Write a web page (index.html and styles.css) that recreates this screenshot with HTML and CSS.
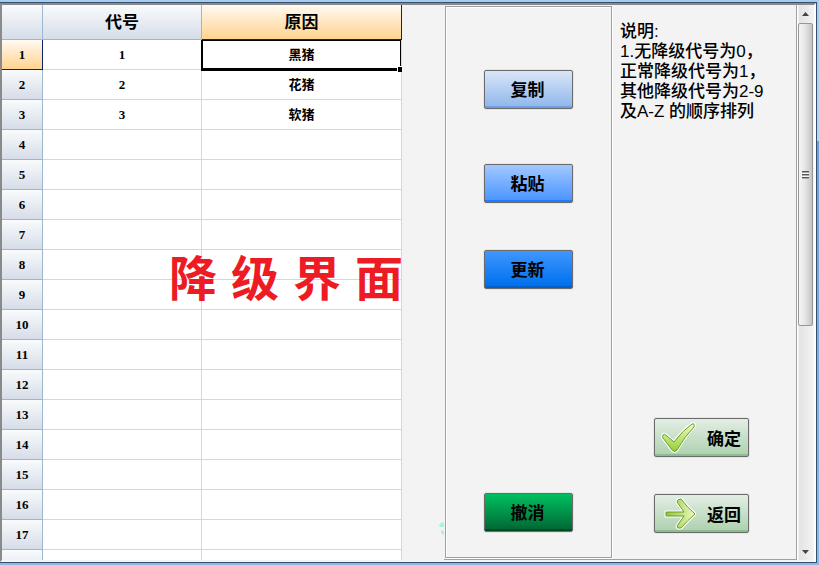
FILE: index.html
```
<!DOCTYPE html>
<html lang="zh-CN">
<head>
    <meta charset="UTF-8">
    <meta name="viewport" content="width=device-width, initial-scale=1.0">
    <title>降级界面</title>
    <link rel="stylesheet" href="styles.css">
</head>
<body>

    <div class="window">
        <main class="content">
            <section class="sheet">
                <table>
                    <colgroup>
                        <col class="col-num">
                        <col class="col-code">
                        <col class="col-reason">
                    </colgroup>
                    <thead>
                        <tr><th></th><th scope="col">代号</th><th scope="col" class="active">原因</th></tr>
                    </thead>
                    <tbody>
                        <tr><th scope="row" class="active">1</th><td>1</td><td class="selected">黑猪</td></tr>
                        <tr><th scope="row">2</th><td>2</td><td>花猪</td></tr>
                        <tr><th scope="row">3</th><td>3</td><td>软猪</td></tr>
                        <tr><th scope="row">4</th><td></td><td></td></tr>
                        <tr><th scope="row">5</th><td></td><td></td></tr>
                        <tr><th scope="row">6</th><td></td><td></td></tr>
                        <tr><th scope="row">7</th><td></td><td></td></tr>
                        <tr><th scope="row">8</th><td></td><td></td></tr>
                        <tr><th scope="row">9</th><td></td><td></td></tr>
                        <tr><th scope="row">10</th><td></td><td></td></tr>
                        <tr><th scope="row">11</th><td></td><td></td></tr>
                        <tr><th scope="row">12</th><td></td><td></td></tr>
                        <tr><th scope="row">13</th><td></td><td></td></tr>
                        <tr><th scope="row">14</th><td></td><td></td></tr>
                        <tr><th scope="row">15</th><td></td><td></td></tr>
                        <tr><th scope="row">16</th><td></td><td></td></tr>
                        <tr><th scope="row">17</th><td></td><td></td></tr>
                        <tr><th></th><td></td><td></td></tr>
                    </tbody>
                </table>
                <div class="caption"><span>降</span><span>级</span><span>界</span><span>面</span></div>
            </section>

            <section class="form">
                <svg class="speck" width="5" height="16" viewBox="0 0 5 16" aria-hidden="true">
                    <path d="M0 4L3 1L5 2V6L1 6ZM2 9L5 10V14L2 12Z" fill="#a8f3df"/>
                </svg>
                <div class="actions">
                    <button type="button" class="btn copy">复制</button>
                    <button type="button" class="btn paste">粘贴</button>
                    <button type="button" class="btn update">更新</button>
                    <button type="button" class="btn undo">撤消</button>
                </div>
                <div class="side">
                    <p class="notes">说明:<br>1.无降级代号为0，<br>正常降级代号为1，<br>其他降级代号为2-9<br>及A-Z 的顺序排列</p>
                    <div class="confirm">
                        <button type="button" class="btn green">
                            <svg width="36" height="32" viewBox="0 0 36 32" aria-hidden="true">
                                <defs>
                                    <linearGradient id="lime" x1="0" y1="0" x2="0" y2="1">
                                        <stop offset="0" stop-color="#f0fbc4"/>
                                        <stop offset="1" stop-color="#93cf36"/>
                                    </linearGradient>
                                </defs>
                                <path d="M3 13Q4 11 7 14L14 20Q22 9 32 2Q35 1 34 5Q25 14 17 28Q15 31 12 28L3 16Q2 15 3 13Z" fill="none" stroke="#fff" stroke-width="3"/>
                                <path d="M3 13Q4 11 7 14L14 20Q22 9 32 2Q35 1 34 5Q25 14 17 28Q15 31 12 28L3 16Q2 15 3 13Z" fill="url(#lime)" stroke="#6c9a22"/>
                            </svg>
                            <span>确定</span>
                        </button>
                        <button type="button" class="btn green">
                            <svg width="36" height="32" viewBox="0 0 36 32" aria-hidden="true">
                                <defs>
                                    <linearGradient id="leaf" x1="0" y1="0" x2="1" y2="0">
                                        <stop offset="0" stop-color="#8cc63a"/>
                                        <stop offset="1" stop-color="#eefac0"/>
                                    </linearGradient>
                                </defs>
                                <path d="M6 14H24L17 4Q17 1 21 1Q27 9 35 16Q27 23 21 30Q17 31 17 28L24 18H6Z" fill="none" stroke="#fff" stroke-width="3" stroke-linejoin="round"/>
                                <path d="M6 14H24L17 4Q17 1 21 1Q27 9 35 16Q27 23 21 30Q17 31 17 28L24 18H6Z" fill="url(#leaf)" stroke="#6c9a22" stroke-linejoin="round"/>
                            </svg>
                            <span>返回</span>
                        </button>
                    </div>
                </div>
            </section>

            <div class="scrollbar" aria-hidden="true">
                <svg class="arrow" width="14" height="17" viewBox="0 0 14 17"><path d="M4 11L7.500 7L11 11Z" fill="#444"/></svg>
                <div class="thumb"><span class="grip"></span></div>
                <svg class="arrow" width="14" height="17" viewBox="0 0 14 17"><path d="M4 7L7.500 11L11 7Z" fill="#444"/></svg>
            </div>
        </main>
    </div>

</body>
</html>
```
FILE: styles.css
```
* {
    box-sizing: border-box;
}
body {
    margin: 0;
    height: 100vh;
    padding: 2px 2px 2px 0;
    background: linear-gradient(#a9cbee 0, #b9d4ef 25%, #6f9fd6 25%, #8db8e6 100%);
    font-family: "Liberation Sans", "Noto Sans CJK SC", sans-serif;
    color: #000;
}
.window {
    height: 100%;
    border: 1px solid #35506f;
    border-left: 0;
}
.content {
    display: flex;
    height: 100%;
    border: 2px solid #8a8a8a;
    border-right-color: #fff;
    border-bottom-color: #f5f5f5;
    background: #f3f3f3;
}

/* spreadsheet */
.sheet {
    position: relative;
    flex: 0 0 400px;
    overflow: hidden;
    background: #fff;
}
table {
    width: 100%;
    table-layout: fixed;
    border-collapse: separate;
    border-spacing: 0;
}
.col-num {
    width: 41px;
}
.col-code {
    width: 159px;
}
th, td {
    height: 30px;
    padding: 0;
    border-right: 1px solid #d0d7e5;
    border-bottom: 1px solid #d0d7e5;
    font-family: "Liberation Serif", "Noto Sans CJK SC", serif;
    font-size: 13px;
    line-height: 20px;
    font-weight: bold;
    text-align: center;
}
th {
    border-color: #9eb6ce;
    background: linear-gradient(#f9fbfc, #d6dde8);
}
thead th {
    height: 35px;
    padding-top: 2px;
    font-size: 17px;
}
th.active {
    border-color: #0a246a;
    background: linear-gradient(#fffaf2, #ffd38f);
}
.selected {
    position: relative;
}
.selected::before {
    content: "";
    position: absolute;
    inset: 0 0 -2px -1px;
    border: 2px solid #000;
    border-width: 1px 1px 3px 2px;
}
.selected::after {
    content: "";
    position: absolute;
    right: -1px;
    bottom: -3px;
    width: 4px;
    height: 5px;
    border: 1px solid #fff;
    border-width: 1px 0 0 1px;
    background: #000;
}
.caption {
    position: absolute;
    right: -1px;
    top: 240px;
    display: flex;
    gap: 14px;
    color: #ed1c24;
    font-family: "Noto Sans CJK SC", sans-serif;
    font-size: 48px;
    line-height: 60px;
    font-weight: bold;
}

/* right side form */
.form {
    position: relative;
    display: flex;
    flex: 1;
    margin-left: 42px;
    border-right: 1px solid #a0a0a0;
    border-bottom: 1px solid #a0a0a0;
}
.speck {
    position: absolute;
    left: -5px;
    bottom: 22px;
}
.actions {
    display: flex;
    flex-direction: column;
    align-items: center;
    gap: 47px;
    width: 167px;
    margin: 1px;
    padding: 63px 0 25px;
    border: 1px solid #a0a0a0;
    box-shadow: inset 1px 1px #fff, 1px 1px #fff;
}
.btn {
    width: 89px;
    height: 39px;
    padding: 0 2px 2px 0;
    border: 1px solid #6b6b6b;
    border-radius: 2px;
    box-shadow: 0 0 0 1px #e6e6e6;
    color: #000;
    font-family: "Noto Sans CJK SC", sans-serif;
    font-size: 17px;
    line-height: 24px;
    font-weight: bold;
}
.copy {
    margin-bottom: 8px;
    background: linear-gradient(#d9e6f7, #92b9ec 94%, #6f9fe0 94%);
}
.paste {
    background: linear-gradient(#a2c8ff, #4c96ff 94%, #1f7aff 94%);
}
.update {
    background: linear-gradient(#3f97ff, #0070ec 94%, #0060d0 94%);
}
.undo {
    margin-top: auto;
    background: linear-gradient(#00c060, #006a35 94%, #004a24 94%);
}
.side {
    display: flex;
    flex: 1;
    flex-direction: column;
    justify-content: space-between;
    padding: 17px 0 26px 7px;
}
.notes {
    margin: 0;
    font-size: 17px;
    line-height: 20px;
    font-weight: 500;
}
.confirm {
    display: flex;
    flex-direction: column;
    align-items: flex-start;
    gap: 37px;
    padding-left: 34px;
}
.green {
    display: flex;
    align-items: center;
    justify-content: space-between;
    width: 95px;
    padding: 0 7px 0 5px;
    background: linear-gradient(#e2eee3, #b0d2b2 94%, #8cbd90 94%);
}

/* scrollbar */
.scrollbar {
    display: flex;
    flex-direction: column;
    width: 17px;
    padding: 0 1px;
    background: linear-gradient(90deg, #fff 1px, #e3e3e3 2px, #f3f3f3);
}
.arrow {
    flex: none;
}
.thumb {
    display: flex;
    align-items: center;
    justify-content: center;
    height: 303px;
    margin: 1px 0 auto;
    border: 1px solid #979797;
    border-radius: 2px;
    background: linear-gradient(90deg, #f5f5f5, #e6e6e8 45%, #c4c4c8);
}
.grip {
    width: 7px;
    height: 8px;
    background: repeating-linear-gradient(#555 0 1px, #aaa 1px 2px, #f5f5f5 2px 3px);
}
```
